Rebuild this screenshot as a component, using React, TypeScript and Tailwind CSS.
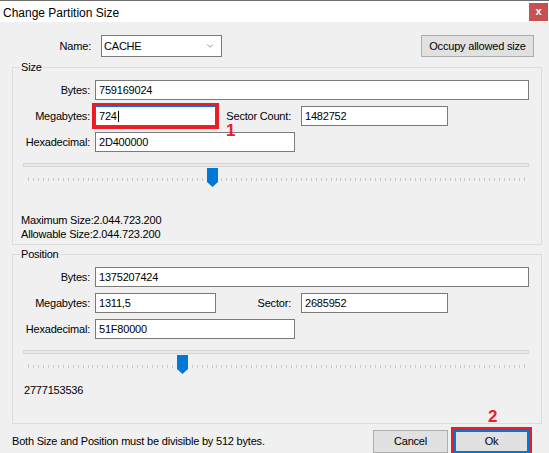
import React from 'react';
import { ChevronDown } from 'lucide-react';

function TextBox({ value, width, focused = false, caret = false }: { value: string; width: string; focused?: boolean; caret?: boolean }) {
  return (
    <div
      className={`${width} h-[20px] bg-white border flex items-center pl-[3px] ${
        focused ? 'border-[#0078d7]' : 'border-[#7a7a7a]'
      }`}
    >
      <span>{value}</span>
      {caret && <span className="w-px h-[11px] bg-black ml-[1px]" />}
    </div>
  );
}

function Ticks() {
  const n = 100;
  const lines = [];
  for (let i = 0; i <= n; i++) {
    const x = Math.round((i * 496) / n) + 0.5;
    const end = i === 0 || i === n;
    lines.push(<line key={i} x1={x} x2={x} y1={end ? 0 : 1} y2={4} stroke="#c8c8c8" strokeWidth={1} />);
  }
  return (
    <svg width="497" height="4" className="block">
      {lines}
    </svg>
  );
}

function Slider({ thumb }: { thumb: string }) {
  return (
    <div className="relative h-[30px] ml-[10px] w-[506px]">
      <div className="mt-[11px] h-[4px] bg-[#e7eaea] border border-[#d6d6d6]" />
      <div className="mt-[10px] ml-[5px]">
        <Ticks />
      </div>
      <svg width="11" height="19" className={`absolute top-[5px] ${thumb}`}>
        <path d="M0 0 H11 V14 L5.5 19 L0 14 Z" fill="#0078d7" />
      </svg>
    </div>
  );
}

function Group({ title, children, className = '' }: { title: string; children: React.ReactNode; className?: string }) {
  return (
    <div className={`relative border border-[#dcdcdc] ${className}`}>
      <span className="absolute -top-[7px] left-[7px] px-[1px] bg-[#f0f0f0] leading-[13px]">{title}</span>
      {children}
    </div>
  );
}

function Label({ children, width }: { children: React.ReactNode; width: string }) {
  return <span className={`${width} text-right shrink-0`}>{children}</span>;
}

export default function App() {
  return (
    <div className="w-[549px] h-[453px] bg-[#f0f0f0] overflow-hidden flex flex-col text-black text-[11px] tracking-[-0.2px] font-['Liberation_Sans',Arial,sans-serif]">
      <div className="h-px bg-[#6d6d6d]" />
      <div className="h-[25px] bg-white flex justify-between">
        <span className="pl-[3px] pt-[5px] text-[12px] tracking-normal leading-[14px]">Change Partition Size</span>
        <button className="mt-[2px] mr-px w-[19px] h-[18px] bg-[#c75050] text-white font-bold text-[11px] leading-none flex items-center justify-center">
          x
        </button>
      </div>

      <div className="pl-[12px] pr-[7px] flex flex-col">
        {/* name row */}
        <div className="mt-[13px] h-[22px] flex items-center">
          <Label width="w-[79px]">Name:</Label>
          <div className="ml-[10px] w-[121px] h-[22px] bg-white border border-[#7a7a7a] flex items-center justify-between pl-[2px] pr-[6px]">
            <span>CACHE</span>
            <ChevronDown className="w-[10px] h-[10px] text-[#555]" strokeWidth={1.5} />
          </div>
          <button className="ml-auto mr-[8px] w-[113px] h-[22px] bg-[#e1e1e1] border border-[#adadad]">
            Occupy allowed size
          </button>
        </div>

        {/* size */}
        <Group title="Size" className="mt-[10px] pt-[12px] pb-[3px]">
          <div className="flex flex-col gap-[6px]">
            <div className="flex items-center">
              <Label width="w-[77px]">Bytes:</Label>
              <div className="ml-[5px]">
                <TextBox value="759169024" width="w-[434px]" />
              </div>
            </div>
            <div className="flex items-center">
              <Label width="w-[77px]">Megabytes:</Label>
              <div className="ml-[5px] relative">
                <TextBox value="724" width="w-[121px]" focused caret />
                <div className="absolute -inset-[3px] border-[3px] border-[#ed1c24]" />
                <span className="absolute left-[131px] top-[16px] text-[17px] font-bold leading-none tracking-normal text-[#e8202a]">1</span>
              </div>
              <Label width="w-[75px]">Sector Count:</Label>
              <div className="ml-[10px]">
                <TextBox value="1482752" width="w-[147px]" />
              </div>
            </div>
            <div className="flex items-center">
              <Label width="w-[77px]">Hexadecimal:</Label>
              <div className="ml-[5px]">
                <TextBox value="2D400000" width="w-[200px]" />
              </div>
            </div>
          </div>
          <div className="mt-[4px]">
            <Slider thumb="left-[184px]" />
          </div>
          <div className="mt-[20px] ml-[8px] leading-[14px]">
            <div>Maximum Size:2.044.723.200</div>
            <div>Allowable Size:2.044.723.200</div>
          </div>
        </Group>

        {/* position */}
        <Group title="Position" className="mt-[9px] pt-[12px] pb-[26px]">
          <div className="flex flex-col gap-[6px]">
            <div className="flex items-center">
              <Label width="w-[77px]">Bytes:</Label>
              <div className="ml-[5px]">
                <TextBox value="1375207424" width="w-[434px]" />
              </div>
            </div>
            <div className="flex items-center">
              <Label width="w-[77px]">Megabytes:</Label>
              <div className="ml-[5px]">
                <TextBox value="1311,5" width="w-[121px]" />
              </div>
              <Label width="w-[75px]">Sector:</Label>
              <div className="ml-[10px]">
                <TextBox value="2685952" width="w-[147px]" />
              </div>
            </div>
            <div className="flex items-center">
              <Label width="w-[77px]">Hexadecimal:</Label>
              <div className="ml-[5px]">
                <TextBox value="51F80000" width="w-[200px]" />
              </div>
            </div>
          </div>
          <div className="mt-[3px]">
            <Slider thumb="left-[154px]" />
          </div>
          <div className="mt-[3px] ml-[11px] leading-[14px]">2777153536</div>
        </Group>

        {/* footer */}
        <div className="mt-[6px] h-[23px] flex items-center">
          <span>Both Size and Position must be divisible by 512 bytes.</span>
          <button className="ml-auto w-[75px] h-[23px] bg-[#e1e1e1] border border-[#adadad]">Cancel</button>
          <div className="relative ml-[6px] mr-[13px]">
            <button className="w-[75px] h-[23px] bg-[#e1e1e1] border-2 border-[#0078d7]">Ok</button>
            <div className="absolute -inset-[3px] border-[3px] border-[#ed1c24]" />
            <span className="absolute left-[34px] -top-[22px] text-[17px] font-bold leading-none tracking-normal text-[#e8202a]">2</span>
          </div>
        </div>
      </div>
    </div>
  );
}
